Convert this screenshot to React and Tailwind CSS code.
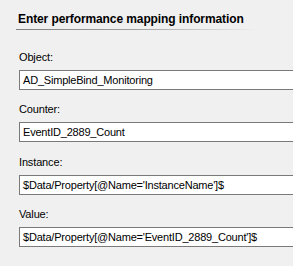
export default function App() {
  const font = { fontFamily: '"Liberation Sans", Arial, sans-serif' };
  const fields = [
    { label: "Object:", value: "AD_SimpleBind_Monitoring", mt: "mt-[19px]" },
    { label: "Counter:", value: "EventID_2889_Count", mt: "mt-[11px]" },
    { label: "Instance:", value: "$Data/Property[@Name='InstanceName']$", mt: "mt-[12px]" },
    { label: "Value:", value: "$Data/Property[@Name='EventID_2889_Count']$", mt: "mt-[11px]" },
  ];
  return (
    <div className="w-[293px] h-[266px] bg-[#f0f0f0] overflow-hidden text-black" style={font}>
      <div className="pt-[11px] pl-[16px]">
        <div className="pl-[2px] text-[12px] leading-[16px] font-bold text-[#000000] tracking-[-0.1px]">
          Enter performance mapping information
        </div>
        <div className="mt-[2px] h-px w-[240px] bg-gradient-to-r from-[#808080] via-[#a0a0a0] to-[#f0f0f0]" />
      </div>
      <div className="pl-[19px]">
        {fields.map((f) => (
          <div key={f.label}>
            <div className={`${f.mt} text-[11px] leading-[16px] tracking-[-0.15px] text-[#000]`}>{f.label}</div>
            <div className="mt-[5px] h-[20px] w-[300px] border border-[#7a7a7a] bg-white pl-[3px] text-[11px] leading-[18px] tracking-[-0.2px] whitespace-nowrap">
              {f.value}
            </div>
          </div>
        ))}
      </div>
    </div>
  );
}
